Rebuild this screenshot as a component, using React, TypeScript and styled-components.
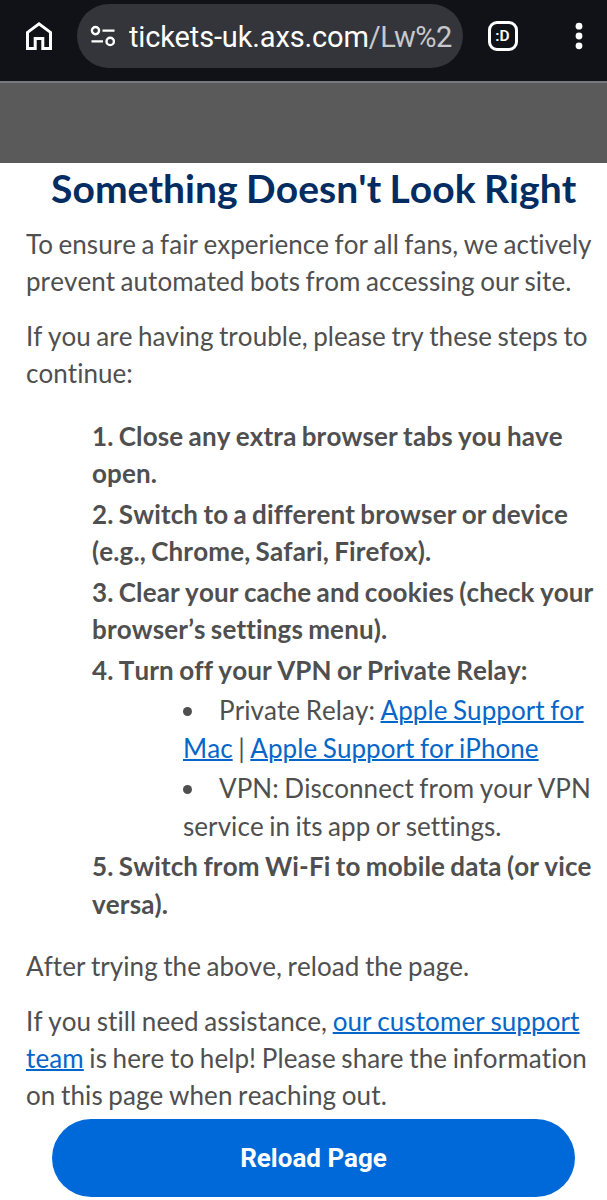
import React from 'react';
import styled, { createGlobalStyle } from 'styled-components';

const GlobalStyle = createGlobalStyle`
  *, *::before, *::after { box-sizing: border-box; }
  body {
    margin: 0;
    background: #ffffff;
    color: #4f4f4f;
    font-family: Lato, 'Liberation Sans', sans-serif;
    font-size: 26px;
    line-height: 37.33px;
  }
`;

const Page = styled.div`
  width: 607px;
  height: 1200px;
  overflow: hidden;
  display: flex;
  flex-direction: column;
`;

const Toolbar = styled.header`
  flex: none;
  display: flex;
  align-items: center;
  height: 81px;
  padding: 4px 18px 13px 23px;
  background: #111218;
`;

const ToolButton = styled.button<{ $width: number }>`
  display: flex;
  align-items: center;
  justify-content: center;
  width: ${({ $width }) => $width}px;
  height: 48px;
  padding: 0;
  border: 0;
  background: none;
  color: #ffffff;
`;

const AddressBar = styled.div`
  display: flex;
  align-items: center;
  width: 386px;
  height: 64px;
  margin: 0 23px 0 22px;
  padding-left: 13px;
  border-radius: 32px;
  background: #34353a;
`;

const Address = styled.span`
  width: 324px;
  margin-left: 13px;
  padding-top: 1px;
  overflow: hidden;
  white-space: nowrap;
  font-family: Roboto, sans-serif;
  font-size: 29px;
  line-height: 40px;
  letter-spacing: -0.14px;
  color: #ffffff;
`;

const AddressPath = styled.span`
  color: #c7c8cd;
  letter-spacing: -0.5px;
`;

const TabCounter = styled.span`
  display: flex;
  align-items: center;
  justify-content: center;
  width: 30px;
  height: 30px;
  margin-left: 1px;
  border: 3px solid #ffffff;
  border-radius: 9px;
  font: 600 15.5px/20px Roboto, sans-serif;
`;

const Spacer = styled.div`
  flex: 1;
`;

const Banner = styled.div`
  flex: none;
  height: 82px;
  border-top: 2px solid #77797e;
  background: #5a5a5a;
`;

const Content = styled.main`
  padding: 0 0 0 26px;
  white-space: nowrap;
  font-variant-ligatures: none;
  font-kerning: none;
  letter-spacing: 0.05px;
  word-spacing: -1.2px;
`;

const Title = styled.h1`
  margin: 0 0 13px 25px;
  font-size: 39px;
  font-weight: 700;
  line-height: 50px;
  color: #032d62;
`;

const Paragraph = styled.p<{ $tracking?: number }>`
  margin: 0 0 17px;
  letter-spacing: ${({ $tracking = 0.05 }) => $tracking}px;
`;

const Kerned = styled.span`
  font-kerning: normal;
`;

const Steps = styled.ol`
  margin: 25.5px 0;
  padding: 0 0 0 66px;
  list-style: none;
`;

const Step = styled.li`
  margin-bottom: 3.3px;
  font-weight: 700;
  letter-spacing: 0.13px;
`;

const Details = styled.ul`
  margin: 3.3px 0 0;
  padding: 0 0 0 91px;
  list-style: none;
`;

const Detail = styled.li`
  margin-bottom: 3.3px;
  font-weight: 400;
  letter-spacing: 0.06px;

  &::before {
    content: '';
    display: inline-block;
    width: 9px;
    height: 9px;
    margin-right: 27px;
    border-radius: 50%;
    background: #4f4f4f;
    vertical-align: 4px;
  }
`;

const Link = styled.a`
  color: #0566c9;
  text-decoration: underline;
  text-decoration-thickness: 2px;
`;

const ReloadButton = styled.button`
  display: block;
  width: 523px;
  height: 78px;
  margin: -13px 0 0 26px;
  padding: 0;
  border: 0;
  border-radius: 39px;
  background: #0069d9;
  color: #ffffff;
  font: 700 26px/78px Roboto, sans-serif;
`;

const HomeIcon = () => (
  <svg width="32" height="32" viewBox="0 0 32 32" fill="none" stroke="currentColor" strokeWidth="3">
    <path d="M4.5 28.4V12.4L16 3.8l11.5 8.6v16H19.8v-10h-7.6v10z" />
  </svg>
);

const SiteControlsIcon = () => (
  <svg width="26" height="22" viewBox="0 0 26 22" fill="none" stroke="#fff" strokeWidth="2.4">
    <circle cx="5.5" cy="5.6" r="3.6" />
    <path d="M12.5 5.6h12M1.5 16.4H13" />
    <circle cx="20.2" cy="16.4" r="3.7" />
  </svg>
);

const MenuIcon = () => (
  <svg width="8" height="28" viewBox="0 0 8 28" fill="currentColor">
    <circle cx="4" cy="4.2" r="3.4" />
    <circle cx="4" cy="14" r="3.4" />
    <circle cx="4" cy="23.8" r="3.4" />
  </svg>
);

export default function App() {
  return (
    <Page>
      <GlobalStyle />
      <Toolbar>
        <ToolButton $width={32} aria-label="Home">
          <HomeIcon />
        </ToolButton>
        <AddressBar>
          <SiteControlsIcon />
          <Address>
            tickets-uk.axs.com<AddressPath>/Lw%2</AddressPath>
          </Address>
        </AddressBar>
        <ToolButton $width={32} aria-label="Tabs">
          <TabCounter>:D</TabCounter>
        </ToolButton>
        <Spacer />
        <ToolButton $width={20} aria-label="More options">
          <MenuIcon />
        </ToolButton>
      </Toolbar>
      <Banner />
      <Content>
        <Title>Something Doesn't Look Right</Title>
        <Paragraph>
          <Kerned>To</Kerned> ensure a fair experience for all fans, we actively
          <br />
          prevent automated bots from accessing our site.
        </Paragraph>
        <Paragraph>
          If you are having trouble, please try these steps to
          <br />
          continue:
        </Paragraph>
        <Steps>
          <Step>
            1. Close any extra browser tabs you have
            <br />
            open.
          </Step>
          <Step>
            2. Switch to a different browser or device
            <br />
            (e.g., Chrome, Safari, Firefox).
          </Step>
          <Step>
            3. Clear your cache and cookies (check your
            <br />
            browser’s settings menu).
          </Step>
          <Step>
            4. Turn off your VPN or Private Relay:
            <Details>
              <Detail>
                Private Relay:{' '}
                <Link>
                  Apple Support for
                  <br />
                  Mac
                </Link>{' '}
                | <Link>Apple Support for iPhone</Link>
              </Detail>
              <Detail>
                VPN: Disconnect from your VPN
                <br />
                service in its app or settings.
              </Detail>
            </Details>
          </Step>
          <Step>
            5. Switch from Wi-Fi to mobile data (or vice
            <br />
            versa).
          </Step>
        </Steps>
        <Paragraph>After trying the above, reload the page.</Paragraph>
        <Paragraph $tracking={0.1}>
          If you still need assistance, <Link>our customer support</Link>
          <br />
          <Link>team</Link> is here to help! Please share the information
          <br />
          on this page when reaching out.
        </Paragraph>
        <ReloadButton>Reload Page</ReloadButton>
      </Content>
    </Page>
  );
}
